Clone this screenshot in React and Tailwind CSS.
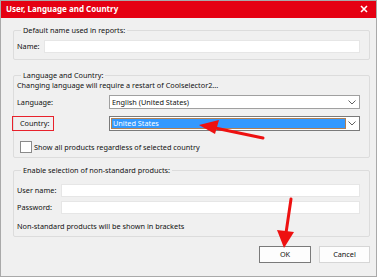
import React from 'react';

const font = { fontFamily: '"Noto Sans", "Open Sans", sans-serif' };

function Chevron() {
    return (
        <svg width="8" height="5" viewBox="0 0 8 5" className="shrink-0">
            <path d="M0.5 0.5 L4 4 L7.5 0.5" fill="none" stroke="#606060" strokeWidth="1" />
        </svg>
    );
}

function Group({ title, className = '', children }) {
    return (
        <fieldset className={`border border-[#dcdcdc] rounded-[2px] ml-[12px] mr-[6px] px-[3px] ${className}`}>
            <legend className="ml-[4px] px-[2px] leading-[11px] text-[7.3px] text-[#111]">{title}</legend>
            {children}
        </fieldset>
    );
}

function TextRow({ label, inputLeft, className = '' }) {
    return (
        <div className={`flex items-center h-[13px] ${className}`}>
            <span className="text-[7.3px] leading-[11px] text-[#111]" style={{ width: inputLeft }}>{label}</span>
            <div className="flex-1 h-[13px] bg-white border border-[#e6e6e6] mr-[6px]" />
        </div>
    );
}

export default function App() {
    return (
        <div className="relative w-[377px] h-[277px] bg-[#f0f0f0] border border-[#a9a9a9] flex flex-col overflow-hidden" style={font}>
            {/* title bar */}
            <div className="h-[18px] bg-[#e50012] flex items-center justify-between pl-[6px] pr-[9px] shrink-0 -mx-px -mt-px">
                <span className="text-white font-bold text-[8px] leading-none">User, Language and Country</span>
                <svg width="8" height="8" viewBox="0 0 8 8">
                    <path d="M1 1 L7 7 M7 1 L1 7" stroke="white" strokeWidth="1.6" />
                </svg>
            </div>

            <div className="flex flex-col pt-[7px]">
                <Group title="Default name used in reports:" className="pt-[4px] pb-[6px]">
                    <TextRow label="Name:" inputLeft={27} />
                </Group>

                <Group title="Language and Country:" className="mt-[10px] pb-[4px]">
                    <div className="text-[7.3px] leading-[10px] text-[#111] -mt-[1px]">
                        Changing language will require a restart of Coolselector2...
                    </div>
                    <div className="flex items-center mt-[5px] h-[14px]">
                        <span className="w-[92px] text-[7.3px] leading-[11px] text-[#111]">Language:</span>
                        <div className="flex-1 h-[14px] bg-white border border-[#a0a0a0] mr-[6px] flex items-center pl-[2px] pr-[3px]">
                            <span className="flex-1 text-[7.3px] leading-[11px] text-[#111]">English (United States)</span>
                            <Chevron />
                        </div>
                    </div>
                    <div className="flex items-center mt-[7px] h-[15px]">
                        <div className="w-[92px] flex">
                            <span className="-ml-[5px] border-[1.5px] border-[#e8212b] h-[15px] w-[42px] flex items-center pl-[7px] text-[7.3px] leading-[11px] text-[#111]">Country:</span>
                        </div>
                        <div className="flex-1 h-[15px] bg-white border border-[#7a7a7a] mr-[6px] flex items-center p-px">
                            <div className="flex-1 h-full bg-[#3399ff] border border-[#b08055] flex items-center pl-[1px]">
                                <span className="text-white text-[7.3px] leading-[11px]">United States</span>
                            </div>
                            <div className="w-[12px] flex justify-center">
                                <Chevron />
                            </div>
                        </div>
                    </div>
                    <div className="flex items-center mt-[10px] ml-[3px] h-[12px]">
                        <div className="w-[12px] h-[12px] bg-white border border-[#8a8a8a]" />
                        <span className="ml-[2px] text-[7.3px] leading-[11px] text-[#111]">Show all products regardless of selected country</span>
                    </div>
                </Group>

                <Group title="Enable selection of non-standard products:" className="mt-[7px] pt-[8px] pb-[5px]">
                    <TextRow label="User name:" inputLeft={44} />
                    <TextRow label="Password:" inputLeft={44} className="mt-[4px]" />
                    <div className="text-[7.3px] leading-[10px] text-[#111] mt-[7px]">
                        Non-standard products will be shown in brackets
                    </div>
                </Group>

                <div className="flex justify-end gap-[8px] mr-[6px] mt-[9px]">
                    <button className="w-[52px] h-[17px] bg-[#fdfdfd] border border-[#7a7a7a] text-[7.3px] text-[#111] leading-none">OK</button>
                    <button className="w-[51px] h-[17px] bg-[#fdfdfd] border border-[#d6d6d6] text-[7.3px] text-[#111] leading-none">Cancel</button>
                </div>
            </div>

            {/* annotation arrows */}
            <svg className="absolute inset-0 pointer-events-none" width="377" height="277" viewBox="0 0 377 277">
                <line x1="262" y1="137" x2="214" y2="127" stroke="#ee1111" strokeWidth="3" strokeLinecap="round" />
                <polygon points="198,124 218,119 214,133" fill="#ee1111" />
                <line x1="290" y1="198" x2="285" y2="232" stroke="#ee1111" strokeWidth="3" strokeLinecap="round" />
                <polygon points="283,247 276,229 293,231" fill="#ee1111" />
            </svg>
        </div>
    );
}
